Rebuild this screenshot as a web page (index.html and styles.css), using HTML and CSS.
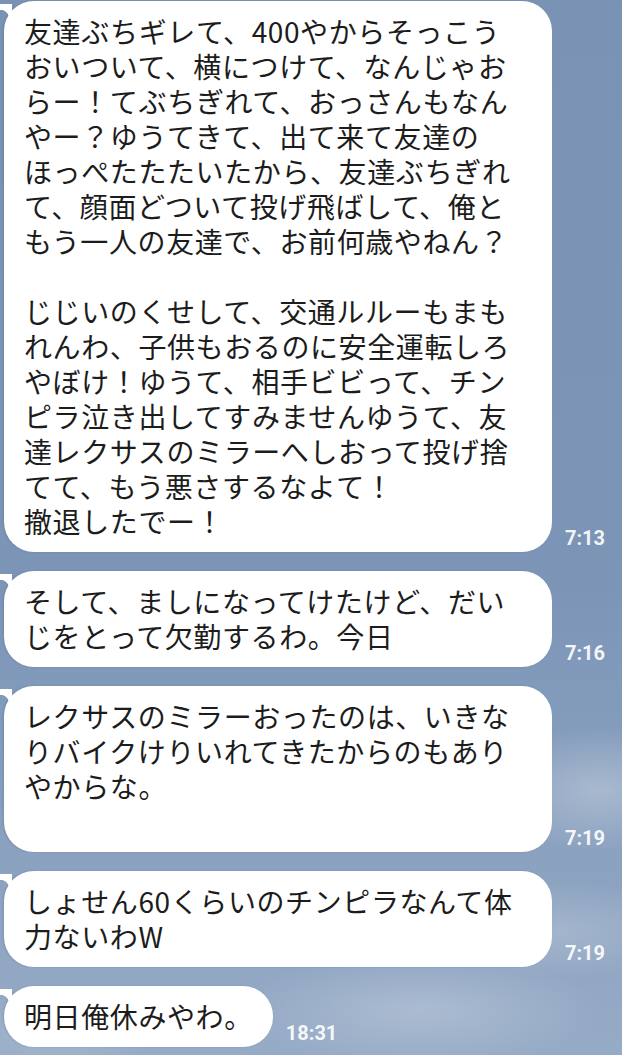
FILE: index.html
```html
<!DOCTYPE html>
<html lang="ja">
<head>
<meta charset="utf-8">
<title>chat</title>
<link rel="stylesheet" href="styles.css">
</head>
<body>
<div class="chat">
  <div class="row">
    <div class="bubble wide"><p class="msg">友達ぶちギレて、400やからそっこう<br>おいついて、横につけて、なんじゃお<br>らー！てぶちぎれて、おっさんもなん<br>やー？ゆうてきて、出て来て友達の<br>ほっぺたたたいたから、友達ぶちぎれ<br>て、顔面どついて投げ飛ばして、俺と<br>もう一人の友達で、お前何歳やねん？<br><span class="spacer"></span>じじいのくせして、交通ルルーもまも<br>れんわ、子供もおるのに安全運転しろ<br>やぼけ！ゆうて、相手ビビって、チン<br>ピラ泣き出してすみませんゆうて、友<br>達レクサスのミラーへしおって投げ捨<br>てて、もう悪さするなよて！<br>撤退したでー！</p></div>
    <span class="time">7:13</span>
  </div>
  <div class="row">
    <div class="bubble wide"><p class="msg">そして、ましになってけたけど、だい<br>じをとって欠勤するわ。今日</p></div>
    <span class="time">7:16</span>
  </div>
  <div class="row">
    <div class="bubble wide"><p class="msg">レクサスのミラーおったのは、いきな<br>りバイクけりいれてきたからのもあり<br>やからな。<span class="spacer"></span></p></div>
    <span class="time">7:19</span>
  </div>
  <div class="row">
    <div class="bubble wide"><p class="msg">しょせん60くらいのチンピラなんて体<br>力ないわW</p></div>
    <span class="time">7:19</span>
  </div>
  <div class="row">
    <div class="bubble"><p class="msg">明日俺休みやわ。</p></div>
    <span class="time">18:31</span>
  </div>
</div>
</body>
</html>
```

FILE: styles.css
```css
html, body {
  margin: 0;
  padding: 0;
}

body {
  width: 622px;
  height: 1055px;
  overflow: hidden;
  background:
    radial-gradient(ellipse 180px 90px at 600px 790px, rgba(255,255,255,0.28), rgba(255,255,255,0) 70%),
    radial-gradient(ellipse 260px 80px at 420px 1010px, rgba(255,255,255,0.22), rgba(255,255,255,0) 70%),
    radial-gradient(ellipse 140px 60px at 60px 1030px, rgba(255,255,255,0.18), rgba(255,255,255,0) 70%),
    radial-gradient(ellipse 200px 70px at 560px 930px, rgba(255,255,255,0.18), rgba(255,255,255,0) 70%),
    linear-gradient(to bottom, #7a93b5 0%, #7c95b7 55%, #8aa1bf 80%, #96abc6 100%);
  font-family: "Noto Sans CJK JP", "Noto Sans", sans-serif;
}

.chat {
  display: flex;
  flex-direction: column;
  gap: 19px;
  padding: 1px 0 0 4px;
}

.row {
  display: flex;
  align-items: flex-end;
}

.bubble {
  position: relative;
  background: #ffffff;
  border-radius: 30px;
  padding: 13px 20px 13px 20px;
  box-shadow: -1px 0 2px rgba(40, 60, 90, 0.18);
}

.bubble::before {
  content: "";
  position: absolute;
  left: -4px;
  top: 3px;
  width: 12px;
  height: 15px;
  background: radial-gradient(circle at 0 100%, rgba(255,255,255,0) 9px, #ffffff 9.5px);
}

.bubble.wide {
  width: 548px;
  box-sizing: border-box;
}

.msg {
  margin: 0;
  font-size: 28px;
  letter-spacing: 0.6px;
  line-height: 35px;
  color: #1c1c1c;
  white-space: nowrap;
}

.spacer {
  display: block;
  height: 35px;
}

.time {
  font-family: Roboto, "Liberation Sans", sans-serif;
  font-weight: 700;
  font-size: 20px;
  line-height: 1;
  color: rgba(255, 255, 255, 0.92);
  margin: 0 0 4px 13px;
}
```
